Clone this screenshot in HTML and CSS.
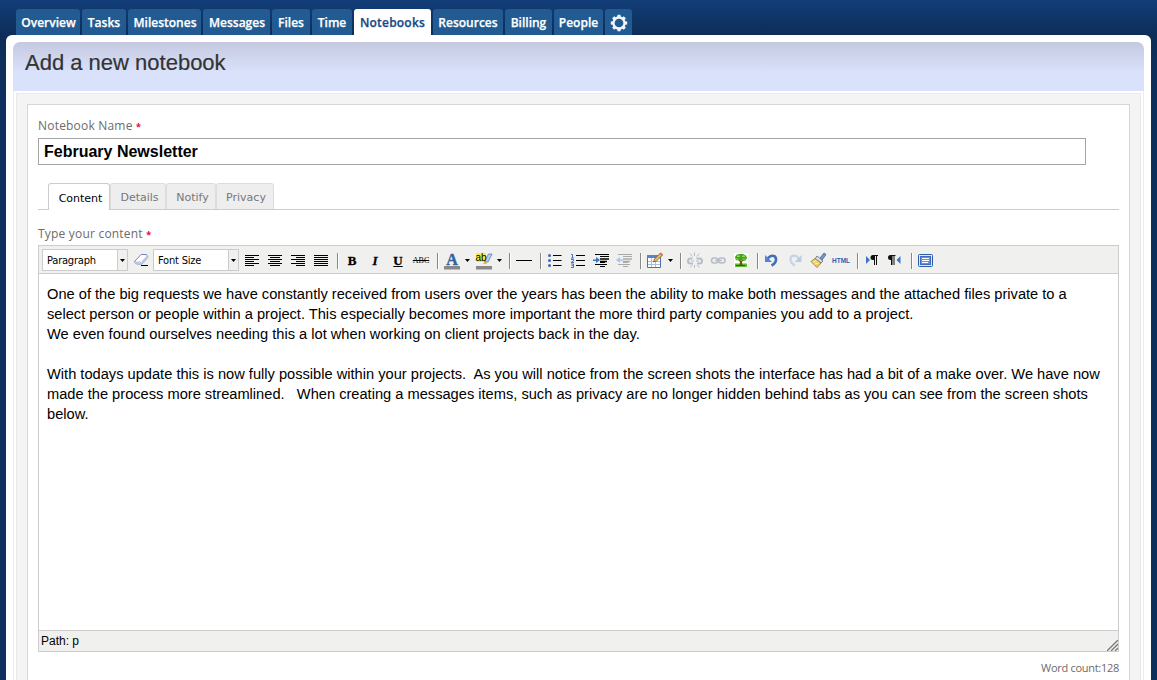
FILE: index.html
```html
<!DOCTYPE html>
<html lang="en">
<head>
<meta charset="utf-8">
<title>Add a new notebook</title>
<link rel="stylesheet" href="styles.css">
</head>
<body>
<nav class="nav">
  <a class="tab overview"><span>Overview</span></a>
  <a class="tab tasks"><span>Tasks</span></a>
  <a class="tab milestones"><span>Milestones</span></a>
  <a class="tab messages"><span>Messages</span></a>
  <a class="tab files"><span>Files</span></a>
  <a class="tab time"><span>Time</span></a>
  <a class="tab notebooks active"><span>Notebooks</span></a>
  <a class="tab resources"><span>Resources</span></a>
  <a class="tab billing"><span>Billing</span></a>
  <a class="tab people"><span>People</span></a>
  <a class="tab settings"><svg width="18" height="18" viewBox="-9 -9 18 18"><circle r="5.500" fill="none" stroke="#f2f5f9" stroke-width="2.300"/><g fill="#f2f5f9"><path id="t" d="M-1.800-5.800-1.500-8.200H1.500L1.800-5.800z"/><use href="#t" transform="rotate(45)"/><use href="#t" transform="rotate(90)"/><use href="#t" transform="rotate(135)"/><use href="#t" transform="rotate(180)"/><use href="#t" transform="rotate(225)"/><use href="#t" transform="rotate(270)"/><use href="#t" transform="rotate(315)"/></g></svg></a>
</nav>
<main class="page">
  <header class="title"><h1>Add a new notebook</h1></header>
  <div class="frame"><div class="panel"><form class="box">
    <label class="label">Notebook Name <i>*</i></label>
    <div class="name-input">February Newsletter</div>
    <div class="subtabs">
      <span class="subtab current">Content</span><span class="subtab details">Details</span><span class="subtab notify">Notify</span><span class="subtab privacy">Privacy</span>
    </div>
    <label class="label second">Type your content <i>*</i></label>
    <section class="editor">
      <div class="toolbar">
        <div class="select"><span>Paragraph</span><b><svg width="5" height="3"><path d="M0 0h5L2.500 3z"/></svg></b></div>
        <svg class="ic" viewBox="0 0 20 20"><path d="M4 11 10 4.500h5.500L17 7l-6 7H5.500L3.500 12z" fill="#fff" stroke="#7187b8"/><path d="M4 11.500h6l1 2.500H5.500zM10.500 11.500 16.500 5l.5 2.500-5.500 6.500z" fill="#b9c8e8"/><path d="M10 15.500h7" stroke="#000"/></svg>
        <div class="select size"><span>Font Size</span><b><svg width="5" height="3"><path d="M0 0h5L2.500 3z"/></svg></b></div>
        <svg class="ic" viewBox="0 0 20 20"><path class="k" d="M3 5.500h14M3 7.500h9M3 9.500h14M3 11.500h9M3 13.500h14M3 15.500h9"/></svg>
        <svg class="ic" viewBox="0 0 20 20"><path class="k" d="M3 5.500h14M5 7.500h10M3 9.500h14M5 11.500h10M3 13.500h14M5 15.500h10"/></svg>
        <svg class="ic" viewBox="0 0 20 20"><path class="k" d="M3 5.500h14M8 7.500h9M3 9.500h14M8 11.500h9M3 13.500h14M8 15.500h9"/></svg>
        <svg class="ic" viewBox="0 0 20 20"><path class="k" d="M3 5.500h14M3 7.500h14M3 9.500h14M3 11.500h14M3 13.500h14M3 15.500h14"/></svg>
        <span class="sep"></span>
        <span class="ic glyph">B</span><span class="ic glyph it">I</span><span class="ic glyph un">U</span><span class="ic glyph st">ABC</span>
        <span class="sep"></span>
        <svg class="ic" viewBox="0 0 20 20"><text x="10" y="14.500" text-anchor="middle" class="fore">A</text><path d="M2 16h16v3.500H2z" fill="#888"/></svg>
        <svg class="arr" viewBox="0 0 8 20"><path d="M2 9h5L4.500 12z"/></svg>
        <svg class="ic" viewBox="0 0 20 20"><path d="M2 3h10v9H2z" fill="#f8f03c"/><path d="m10.500 11.500 4-7.500h3.500l-4 8z" fill="#b8cdf2" stroke="#607bb5" stroke-width=".8"/><path d="m9 14 1.800-2.500 2.700.8-1.500 1.700z" fill="#e2b33e"/><text x="1.500" y="11" class="back">ab</text><path d="M2 16h16v3.500H2z" fill="#888"/></svg>
        <svg class="arr" viewBox="0 0 8 20"><path d="M2 9h5L4.500 12z"/></svg>
        <span class="sep"></span>
        <svg class="ic" viewBox="0 0 20 20"><path class="k" d="M2 10.500h16"/></svg>
        <span class="sep"></span>
        <svg class="ic" viewBox="0 0 20 20"><g fill="#3768bb"><circle cx="4.500" cy="5.500" r="1.500"/><circle cx="4.500" cy="10.500" r="1.500"/><circle cx="4.500" cy="15.500" r="1.500"/></g><path class="k" d="M8 5.500h8.500M8 10.500h8.500M8 15.500h8.500"/></svg>
        <svg class="ic" viewBox="0 0 20 20"><path d="M3 4.500h1.500V8M3 8h3M3 9.500h2.500v1.500L3 12.500h3M3 14h2.500v3.500H3M3.500 15.700h2" fill="none" stroke="#3f75ca"/><path class="k" d="M8 5.500h9M8 10.500h9M8 15.500h9"/></svg>
        <svg class="ic" viewBox="0 0 20 20"><path class="k" d="M4 4.500h14M9 6.500h9M9 12.500h5M4 14.500h12M9 16.500h5"/><path d="M9 9h9M9 11.500h7" stroke="#000" stroke-width="1.600"/><path d="M2 9.500h3V7l4 3-4 3v-2H2z" fill="#3d73cd"/></svg>
        <svg class="ic" viewBox="0 0 20 20"><path d="M4 4.500h14M9 6.500h9M9 12.500h5M4 14.500h12M9 16.500h5" stroke="#aaa"/><path d="M9 9h9M9 11.500h7" stroke="#aaa" stroke-width="1.600"/><path d="M9 9.500H6V7l-4 3 4 3v-2h3z" fill="#aec4e9"/></svg>
        <span class="sep"></span>
        <svg class="ic" viewBox="0 0 20 20"><path d="M2.500 5.500h13v12h-13z" fill="#fff" stroke="#4e6fa9"/><path d="M2 5h14v3H2z" fill="#5d83c7"/><path d="M3 11.500h12M3 14.500h12M6.500 8v9M10.500 8v9" stroke="#a8bddf"/><path d="m8.500 12 1-3 6-6 2.200 2-6.200 6z" fill="#e9bd64" stroke="#79522c" stroke-width=".8"/><path d="m14.500 4 1.500-1.500L18 4.500 16.500 6z" fill="#d27c60"/></svg>
        <svg class="arr" viewBox="0 0 8 20"><path d="M2 9h5L4.500 12z"/></svg>
        <span class="sep"></span>
        <svg class="ic" viewBox="0 0 20 20"><g fill="none" stroke="#b7bdc9"><path d="M7.500 8.500h-2a2.500 2.500 0 0 0 0 5h2.500M11.500 8.500h3a2.500 2.500 0 0 1 0 5H12" stroke-width="2"/><path d="M6 11h3M11 11h3M9.500 2.500V6M5 3.500l2.500 3M14.500 3.500l-3 3M9.500 15v3M7.500 15 5 17.500M12 15l2.500 2.500"/></g></svg>
        <svg class="ic" viewBox="0 0 20 20"><g fill="none" stroke="#b7bdc9"><rect x="3.500" y="8" width="6.500" height="5" rx="2.500" stroke-width="1.600"/><rect x="10.500" y="8" width="6.500" height="5" rx="2.500" stroke-width="1.600"/><path d="M7 10.500h7" stroke-width="1.500"/></g></svg>
        <svg class="ic" viewBox="0 0 20 20"><path d="M3 3h14v14H3z" fill="#fff"/><path d="M4 13.500h12V17H4z" fill="#5cbd2a"/><path d="m9 9 1 2 2-2 .500 1-1.500 2 .500 3H8.500l.5-3-2-2z" fill="#7d4b17"/><path d="M4 7l2-2.500L9 4h3l3 1.500L16 8l-1.500 2.500-2.500.5-1-1-2 1-2-1-2 .5z" fill="#3fa025"/><path d="M6 5.500h3V7H6zM11 5.500h3V7h-3zM5 8.500h2.500v1H5zM11.500 8.500h3v1h-3z" fill="#96df4a"/><path d="M5 15.500h9" stroke="#2a641b"/></svg>
        <span class="sep"></span>
        <svg class="ic" viewBox="0 0 20 20"><path d="M5 9.500C8 4.500 13.500 4.500 14 9c.2 3-1.500 5-4.500 6.500" fill="none" stroke="#416dbb" stroke-width="2.600"/><path d="M3 5v7h7z" fill="#5583d3"/></svg>
        <svg class="ic" viewBox="0 0 20 20"><path d="M14.500 9.500C11.500 4.500 6 4.500 5.500 9c-.2 3 1.500 5 4.500 6.500" fill="none" stroke="#c8d3e5" stroke-width="2.300"/><path d="M16.500 5v7h-7z" fill="#bdcbe2"/></svg>
        <svg class="ic" viewBox="0 0 20 20"><path d="m12 8 4-5 2 1.500L14 10z" fill="#7893c7" stroke="#4b6295" stroke-width=".8"/><path d="m9 6 6 5-2 2-6-4z" fill="#d8dceb" stroke="#606984" stroke-width=".8"/><path d="m7 8.500 6 4.500-4 4.500-6-6z" fill="#efce67" stroke="#8c7439" stroke-width=".8"/><path d="m4.500 12 4-1M6.500 14l4-1" stroke="#fff3a7"/></svg>
        <svg class="ic" viewBox="0 0 20 20"><text x="1" y="13" class="html" textLength="18" lengthAdjust="spacingAndGlyphs">HTML</text></svg>
        <span class="sep"></span>
        <svg class="ic" viewBox="0 0 20 20"><path d="M4 6v8l4-4z" fill="#3e75ca"/><path d="M12 10H11a2.500 2.500 0 0 1 0-5h5v1h-1v9h-1V6h-1v9h-1z" fill="#111"/></svg>
        <svg class="ic" viewBox="0 0 20 20"><path d="M15.500 6v8l-4-4z" fill="#3e75ca"/><path d="M6 10H5.500a2.500 2.500 0 0 1 0-5h5v1h-1v9h-1V6h-1v9H6z" fill="#111"/></svg>
        <span class="sep"></span>
        <svg class="ic" viewBox="0 0 20 20"><rect x="2.500" y="4.500" width="14" height="12" rx="1" fill="#dce7fa" stroke="#315ba6"/><rect x="4.500" y="6.500" width="10" height="8" fill="#5f91e4" stroke="#3a6cc2"/><path d="M6 8.500h7M6 10.500h7M6 12.500h6" stroke="#fff"/></svg>
      </div>
      <div class="content">
        <p>One of the big requests we have constantly received from users over the years has been the ability to make both messages and the attached files private to a</p>
        <p>select person or people within a project. This especially becomes more important the more third party companies you add to a project.</p>
        <p>We even found ourselves needing this a lot when working on client projects back in the day.</p>
        <p>&nbsp;</p>
        <p>With todays update this is now fully possible within your projects.&nbsp; As you will notice from the screen shots the interface has had a bit of a make over. We have now</p>
        <p>made the process more streamlined.&nbsp;&nbsp; When creating a messages items, such as privacy are no longer hidden behind tabs as you can see from the screen shots</p>
        <p>below.</p>
      </div>
      <footer class="status"><span>Path: p</span><svg width="11" height="11"><path d="M0 11 11 0M4 11l7-7M8 11l3-3" stroke="#777" stroke-width="1.300"/></svg></footer>
    </section>
    <div class="count">Word count:128</div>
  </form></div></div>
</main>
</body>
</html>
```
FILE: styles.css
```css
* { box-sizing: border-box; }
body { margin: 0; height: 680px; overflow: hidden; padding: 9px 6px 0; background: #0e2f5c linear-gradient(#123e79 0, #0d2d58 35px, #0e2f5c 60px); font-family: "Liberation Sans", Arial, sans-serif; color: #000; }
.nav { display: flex; gap: 2px; height: 26px; padding-left: 10px; }
.tab { display: flex; justify-content: center; align-items: center; height: 26px; padding-top: 1px; background: #215b91; border-radius: 3px 3px 0 0; color: #fff; font: 600 12px "Open Sans", sans-serif; -webkit-text-stroke: .25px; white-space: nowrap; }
.tab.active { background: #fff; color: #174a83; letter-spacing: .2px; }
.overview { width: 64px; padding-left: 1px; } .tasks { width: 44px; } .milestones { width: 73px; padding-left: 1px; } .messages { width: 67px; padding-left: 1px; } .files { width: 38px; } .time { width: 40px; } .notebooks { width: 77px; } .resources { width: 70px; } .billing { width: 47px; } .people { width: 49px; } .settings { width: 27px; }
.page { height: 645px; overflow: hidden; background: #fff; border-radius: 6px 6px 0 0; padding: 7px 7px 0; }
.title { height: 49px; border-radius: 7px 7px 0 0; background: linear-gradient(#c4c9df 0, #d9e1fb 30px); padding: 7px 12px; }
h1 { margin: 0; font: 22px/28px "Liberation Sans", Arial, sans-serif; color: #333; white-space: nowrap; -webkit-text-stroke: .2px; }
.frame { border: solid #ececec; border-width: 0 1px; padding: 2px 2px 0; }
.panel { border: 1px solid #eaeaea; border-bottom: 0; background: #f4f4f4; padding: 10px 10px 0; height: 587px; }
.box { height: 576px; background: #fff; border: 1px solid #d6d6d6; border-bottom: 0; padding: 12px 10px 0; }
.label { display: block; height: 21px; font: 12px/18px "Open Sans", sans-serif; color: #6c6c6c; letter-spacing: .2px; white-space: nowrap; }
.label i { color: #f00040; font-style: normal; font-size: 9px; font-weight: 700; }
.name-input { width: 1048px; height: 27px; border: 1px solid #a5a5a5; padding-left: 5px; font: bold 16px/25px "Liberation Sans", Arial, sans-serif; }
.subtabs { display: flex; margin-top: 18px; height: 27px; padding-left: 10px; border-bottom: 1px solid #ccc; font: 11px/28px "DejaVu Sans", sans-serif; color: #777; }
.subtab { height: 26px; text-align: center; background: #eee; border: 1px solid #ddd; border-bottom: 0; border-radius: 3px 3px 0 0; white-space: nowrap; }
.current { width: 62px; height: 27px; background: #fff; border-color: #ccc; color: #000; line-height: 30px; padding-left: 3px; }
.details { width: 56px; padding-left: 3px; } .notify { width: 50px; padding-left: 3px; } .privacy { width: 58px; padding-left: 2px; }
.second { margin-top: 15px; height: 20px; }
.editor { height: 407px; border: 1px solid #ccc; display: flex; flex-direction: column; }
.toolbar { height: 28px; border-bottom: 1px solid #ccc; background: #f0f0ee; display: flex; gap: 3px; padding: 3px 0 0 3px; align-items: flex-start; flex: none; }
.select { width: 86px; height: 22px; border: 1px solid #ccc; background: #fff; display: flex; font: 11px/22px "DejaVu Sans Condensed", "DejaVu Sans", sans-serif; }
.select.size { margin-left: -1px; }
.select span { flex: 1; padding-left: 4px; white-space: nowrap; letter-spacing: -.2px; }
.select b { width: 10px; border-left: 1px solid #ccc; background: #f0f0ee; display: flex; align-items: center; justify-content: center; }
.ic { width: 20px; height: 20px; margin-top: 1px; flex: none; }
.k { stroke: #000; fill: none; }
.arr { width: 8px; height: 20px; margin: 1px 0 0 -2px; flex: none; }
.sep { width: 2px; height: 16px; margin: 4px 0 0 3px; border-left: 1px solid #888; border-right: 1px solid #fff; flex: none; }
.glyph { text-align: center; font: bold 13px/20px "Liberation Serif", serif; padding-top: 1px; -webkit-text-stroke: .3px; }
.it { font-style: italic; }
.un { text-decoration: underline; }
.st { font-size: 8px; font-weight: normal; text-decoration: line-through; -webkit-text-stroke: 0; }
.fore { font: bold 16px "Liberation Serif", serif; fill: #36609f; stroke: #36609f; stroke-width: .4px; }
.back { font: 10px "Liberation Sans", sans-serif; }
.html { font: bold 7px "Liberation Sans", sans-serif; fill: #2e5dae; }
.content { flex: 1; padding: 10px 8px; font-size: 14.65px; line-height: 20px; }
.content p { margin: 0; height: 20px; white-space: nowrap; }
.status { height: 21px; flex: none; background: #f0f0ee; border-top: 1px solid #ccc; display: flex; justify-content: space-between; align-items: flex-end; padding-left: 2px; font-size: 12px; line-height: 20px; }
.count { text-align: right; font: 11px/18px "Open Sans", sans-serif; color: #6c6c6c; margin-top: 7px; letter-spacing: -.28px; }
```
